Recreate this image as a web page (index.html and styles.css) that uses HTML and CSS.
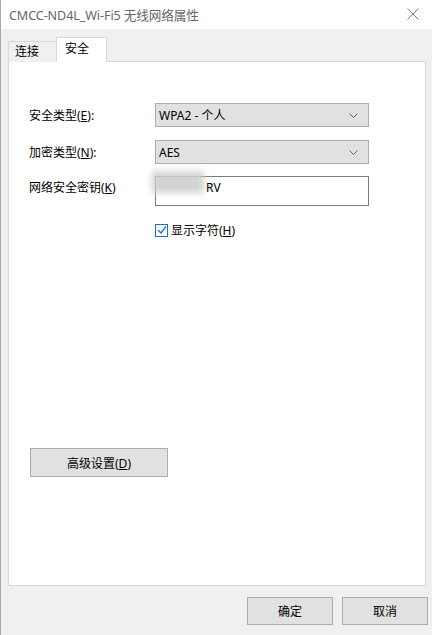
FILE: index.html
```html
<!DOCTYPE html>
<html lang="zh-CN">
<head>
<meta charset="utf-8">
<title>CMCC-ND4L_Wi-Fi5 无线网络属性</title>
<link rel="stylesheet" href="styles.css">
</head>
<body>
<div class="window">
  <div class="titlebar">
    <span class="title">CMCC-ND4L_Wi-Fi5 无线网络属性</span>
    <svg class="close" width="12" height="12" viewBox="0 0 12 12"><path d="M0.5 0.5 L11.5 11.5 M11.5 0.5 L0.5 11.5" stroke="#7a7a7a" stroke-width="1" fill="none"/></svg>
  </div>
  <div class="client">
    <div class="tabs">
      <div class="tab">连接</div>
      <div class="tab active">安全</div>
    </div>
    <div class="panel">
      <div class="row">
        <span class="label">安全类型(<u>E</u>):</span>
        <div class="combo"><span>WPA2 - 个人</span><svg width="9" height="6" viewBox="0 0 9 6"><path d="M0.5 0.5 L4.5 4.5 L8.5 0.5" stroke="#606060" fill="none"/></svg></div>
      </div>
      <div class="row r2">
        <span class="label">加密类型(<u>N</u>):</span>
        <div class="combo"><span>AES</span><svg width="9" height="6" viewBox="0 0 9 6"><path d="M0.5 0.5 L4.5 4.5 L8.5 0.5" stroke="#606060" fill="none"/></svg></div>
      </div>
      <div class="row r3">
        <span class="label keylabel">网络安全密钥(<u>K</u>)</span>
        <div class="input"><span class="blur"></span><span class="keytext">RV</span></div>
      </div>
      <div class="row r4">
        <span class="label"></span>
        <label class="check"><span class="box"><svg width="10" height="10" viewBox="0 0 10 10"><path d="M1 5 L4 8 L9 1.5" stroke="#1a73c8" stroke-width="1.3" fill="none"/></svg></span>显示字符(<u>H</u>)</label>
      </div>
      <div class="spacer"></div>
      <div class="adv"><button class="btn advbtn">高级设置(<u>D</u>)</button></div>
    </div>
    <div class="footer">
      <button class="btn">确定</button>
      <button class="btn">取消</button>
    </div>
  </div>
</div>
</body>
</html>
```

FILE: styles.css
```css
* { box-sizing: border-box; }
html, body { margin: 0; padding: 0; }
body {
  width: 432px;
  height: 635px;
  overflow: hidden;
  font-family: "Noto Sans", "Noto Sans CJK SC", sans-serif;
  font-size: 12px;
  color: #000;
  background: #f0f0f0;
}
.window {
  height: 635px;
  border-left: 1px solid #a8a8a8;
  display: flex;
  flex-direction: column;
}
.titlebar {
  height: 29px;
  background: #fff;
  display: flex;
  align-items: center;
  justify-content: space-between;
  padding: 0 13px 0 8px;
  flex: none;
}
.title {
  font-size: 12.6px;
  color: #666;
  letter-spacing: -0.1px;
}
.close { display: block; margin-top: -2px; }
.client {
  flex: 1;
  background: #f0f0f0;
  display: flex;
  flex-direction: column;
  padding: 0 6px 0 7px;
}
.tabs {
  display: flex;
  align-items: flex-end;
  height: 33px;
  position: relative;
  z-index: 1;
  margin-bottom: -1px;
}
.tab {
  height: 21px;
  width: 48px;
  border: 1px solid #d9d9d9;
  border-bottom: none;
  border-right: none;
  background: #f0f0f0;
  padding: 1px 0 0 6px;
  line-height: 18px;
}
.tab.active {
  height: 25px;
  width: 51px;
  background: #fff;
  border-right: 1px solid #d9d9d9;
  padding: 2px 0 0 8px;
  line-height: 18px;
}
.panel {
  height: 525px;
  background: #fff;
  border: 1px solid #d9d9d9;
  padding: 41px 0 0 20px;
  display: flex;
  flex-direction: column;
}
.row {
  display: flex;
  align-items: center;
}
.label {
  width: 126px;
  flex: none;
}
.r2 { margin-top: 13px; }
.r3 { margin-top: 12px; align-items: flex-start; }
.keylabel { margin-top: 2px; }
.r4 { margin-top: 15px; }
.combo {
  width: 214px;
  height: 24px;
  background: #e1e1e1;
  border: 1px solid #adadad;
  display: flex;
  align-items: center;
  justify-content: space-between;
  padding: 0 10px 0 3px;
}
.combo svg { display: block; margin-top: 1px; }
.input {
  width: 214px;
  height: 30px;
  background: #fff;
  border: 1px solid #7a7a7a;
  position: relative;
  padding: 0 0 0 50px;
  line-height: 20px;
}
.blur {
  position: absolute;
  left: -4px;
  top: -6px;
  width: 52px;
  height: 22px;
  background: #cfcfcf;
  filter: blur(3px);
  opacity: 0.9;
}
.keytext { position: relative; top: 1px; }
.check {
  display: flex;
  align-items: center;
}
.box {
  width: 13px;
  height: 13px;
  border: 1px solid #1a73c8;
  background: #fff;
  margin-right: 3px;
  display: flex;
  align-items: center;
  justify-content: center;
}
.box svg { display: block; }
.spacer { height: 209px; }
.btn {
  font-family: "Noto Sans", "Noto Sans CJK SC", sans-serif;
  font-size: 12px;
  color: #000;
  background: #e1e1e1;
  border: 1px solid #adadad;
  width: 86px;
  height: 28px;
  padding: 0;
}
.adv { padding-left: 1px; }
.advbtn { width: 138px; height: 29px; }
.footer {
  display: flex;
  justify-content: flex-end;
  gap: 9px;
  padding: 11px 0 0 0;
  margin-right: -2px;
}
u { text-decoration: underline; text-underline-offset: 1px; }
```
